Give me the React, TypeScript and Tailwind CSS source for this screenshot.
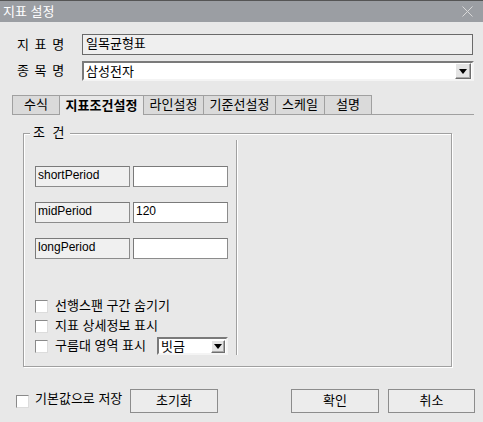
import React, { useState } from 'react';

const KR = "font-['Liberation_Sans','Noto_Sans_CJK_KR',sans-serif]";

const tabs = ['수식', '지표조건설정', '라인설정', '기준선설정', '스케일', '설명'];
const tabWidths = ['w-[48px]', 'w-[84px]', 'w-[60px]', 'w-[72px]', 'w-[49px]', 'w-[47px]'];

const params = [
  { name: 'shortPeriod', value: '' },
  { name: 'midPeriod', value: '120' },
  { name: 'longPeriod', value: '' },
];

const DropButton: React.FC<{ size: string }> = ({ size }) => (
  <div
    className={`${size} flex items-center justify-center bg-[#e4e4e4] border border-t-white border-l-white border-b-[#6e6e6e] border-r-[#6e6e6e] shadow-[inset_-1px_-1px_0_#a8a8a8]`}
  >
    <svg width="8" height="5" viewBox="0 0 8 5">
      <path d="M0 0h8L4 5z" fill="#000" />
    </svg>
  </div>
);

const CheckBox: React.FC<{ checked: boolean; onClick: () => void }> = ({ checked, onClick }) => (
  <div
    onClick={onClick}
    className="w-[13px] h-[13px] shrink-0 bg-white border border-t-[#8a8a8a] border-l-[#8a8a8a] border-b-[#dcdcdc] border-r-[#dcdcdc] flex items-center justify-center"
  >
    {checked && (
      <svg width="9" height="9" viewBox="0 0 9 9">
        <path d="M1 4.5l2.5 2.5L8 1.5" stroke="#000" strokeWidth="1.6" fill="none" />
      </svg>
    )}
  </div>
);

export default function App() {
  const [activeTab, setActiveTab] = useState(1);
  const [checks, setChecks] = useState([false, false, false, false]);

  const toggle = (i: number) => setChecks(prev => prev.map((c, idx) => (idx === i ? !c : c)));

  return (
    <div className={`w-[483px] h-[422px] bg-[#e8e8e8] flex flex-col text-[13px] text-black ${KR}`}>
      {/* Title bar */}
      <div className="h-[22px] shrink-0 bg-[#9b9ea3] border-t border-[#555] flex items-center justify-between pl-[3px] pr-[10px]">
        <span className="text-white text-[13px] leading-none">지표 설정</span>
        <svg width="11" height="11" viewBox="0 0 11 11">
          <path d="M0.5 0.5l10 10M10.5 0.5l-10 10" stroke="#d8d8d8" strokeWidth="1" />
        </svg>
      </div>

      {/* 지표명 */}
      <div className="mt-[12px] flex items-center h-[21px] pl-[17px]">
        <span className="w-[65px] tracking-[1px]">지 표 명</span>
        <div className="w-[391px] h-[21px] border border-[#6a6a6a] bg-[#efefef] pl-[3px] leading-[17px]">
          일목균형표
        </div>
      </div>

      {/* 종목명 */}
      <div className="mt-[6px] flex items-center h-[20px] pl-[17px]">
        <span className="w-[65px] tracking-[1px]">종 목 명</span>
        <div className="w-[392px] h-[20px] bg-white border-2 border-t-[#7a7a7a] border-l-[#7a7a7a] border-b-[#f4f4f4] border-r-[#f4f4f4] flex items-center justify-between pr-[1px]">
          <span className="pl-[2px] leading-none">삼성전자</span>
          <DropButton size="w-[16px] h-[16px]" />
        </div>
      </div>

      {/* Tabs */}
      <div className="mt-[14px] ml-[12px] w-[462px] h-[20px] border-b border-[#a0a0a0] flex items-start">
        {tabs.map((t, i) => (
          <div
            key={t}
            onClick={() => setActiveTab(i)}
            className={`${tabWidths[i]} flex items-center justify-center border-t border-r border-[#a0a0a0] ${
              i === 0 ? 'border-l' : ''
            } ${activeTab === i ? 'h-[20px] bg-[#e8e8e8] font-bold' : 'h-[19px] bg-[#dadada]'}`}
          >
            {t}
          </div>
        ))}
      </div>

      {/* Group box */}
      <div className="mt-[18px] ml-[23px] w-[429px] h-[234px] shrink-0 relative border border-[#a0a0a0] shadow-[inset_1px_1px_0_#fff,1px_1px_0_#fff] flex">
        <span className="absolute left-[6px] top-[-9px] px-[3px] bg-[#e8e8e8] tracking-[2px] leading-[16px]">조 건</span>

        <div className="w-[213px] pt-[6px] pb-[11px]">
          <div className="h-full border-r border-[#a0a0a0] shadow-[1px_0_0_#fff] pl-[11px] pt-[26px]">
            <div className="w-[193px] flex flex-col gap-[15px] text-[12px]">
              {params.map(p => (
                <div key={p.name} className="flex gap-[3px] h-[21px]">
                  <div className="w-[95px] border border-t-[#7a7a7a] border-l-[#7a7a7a] border-b-[#8c8c8c] border-r-[#8c8c8c] bg-[#f0f0f0] pl-[2px] leading-[16px]">
                    {p.name}
                  </div>
                  <div className="w-[95px] border border-t-[#7a7a7a] border-l-[#7a7a7a] border-b-[#8c8c8c] border-r-[#8c8c8c] bg-white pl-[2px] leading-[16px]">
                    {p.value}
                  </div>
                </div>
              ))}
            </div>

            <div className="w-[193px] mt-[37px] flex flex-col">
              <div className="h-[20px] flex items-center gap-[7px]">
                <CheckBox checked={checks[0]} onClick={() => toggle(0)} />
                <span>선행스팬 구간 숨기기</span>
              </div>
              <div className="h-[20px] flex items-center gap-[7px]">
                <CheckBox checked={checks[1]} onClick={() => toggle(1)} />
                <span>지표 상세정보 표시</span>
              </div>
              <div className="h-[20px] flex items-center gap-[7px]">
                <CheckBox checked={checks[2]} onClick={() => toggle(2)} />
                <span>구름대 영역 표시</span>
                <div className="ml-auto w-[71px] h-[18px] bg-white border-2 border-t-[#7a7a7a] border-l-[#7a7a7a] border-b-[#f4f4f4] border-r-[#f4f4f4] flex items-center justify-between pr-[1px]">
                  <span className="pl-[2px] leading-none">빗금</span>
                  <DropButton size="w-[14px] h-[13px]" />
                </div>
              </div>
            </div>
          </div>
        </div>
      </div>

      {/* Bottom buttons */}
      <div className="mt-[22px] flex items-center h-[24px] pl-[16px]">
        <CheckBox checked={checks[3]} onClick={() => toggle(3)} />
        <span className="ml-[6px] w-[95px] -mt-[4px] whitespace-nowrap">기본값으로 저장</span>
        <button className="w-[88px] h-[24px] bg-[#ececec] border border-[#8c8c8c]">초기화</button>
        <button className="ml-[73px] w-[88px] h-[24px] bg-[#ececec] border border-[#8c8c8c]">확인</button>
        <button className="ml-[9px] w-[87px] h-[24px] bg-[#ececec] border border-[#8c8c8c]">취소</button>
      </div>
    </div>
  );
}
